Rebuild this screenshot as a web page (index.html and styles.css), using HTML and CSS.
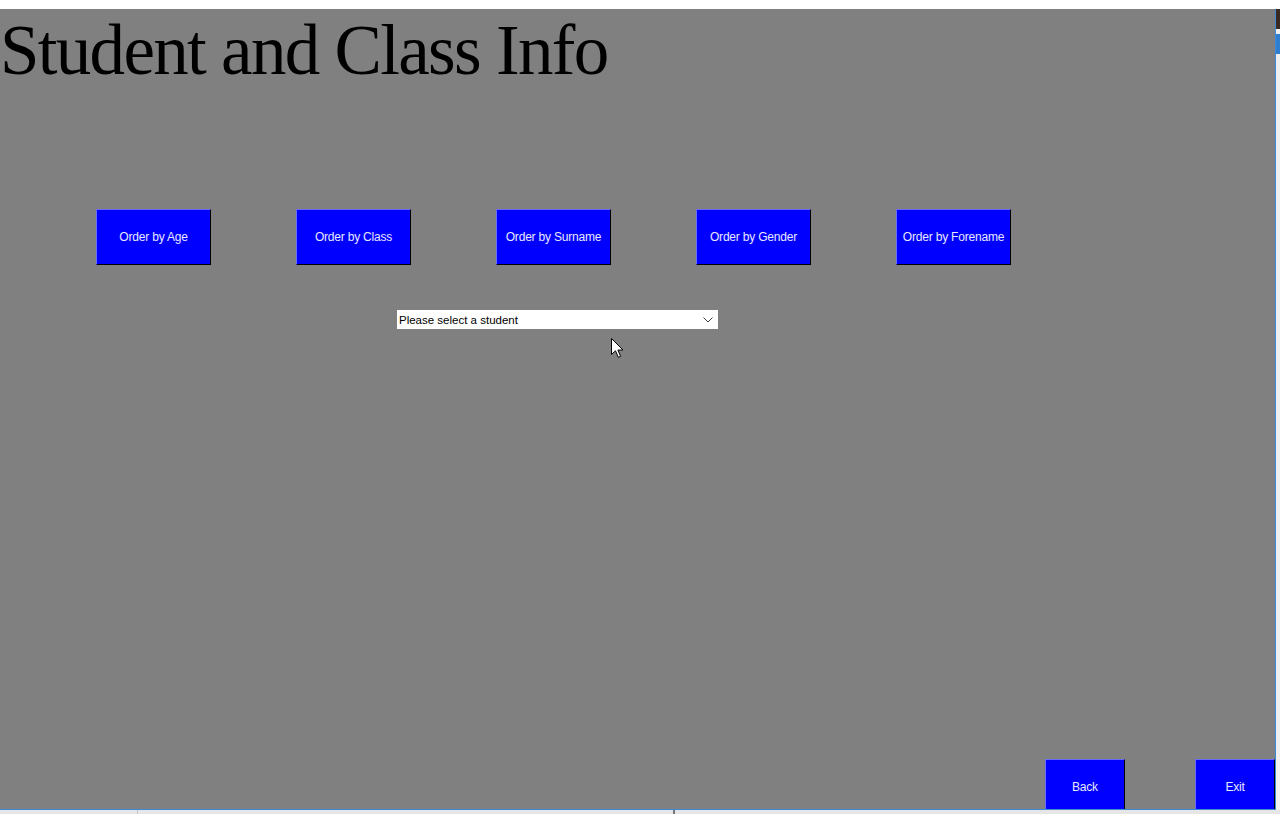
FILE: index.html
```html
<!DOCTYPE html>
<html>
<head>
<meta charset="utf-8">
<title>Student and Class Info</title>
<link rel="stylesheet" href="styles.css">
</head>
<body>
<div class="topstrip"></div>
<div class="middle">
  <div class="window">
    <h1 class="title">Student and Class Info</h1>
    <div class="order-row">
      <button class="btn order">Order by Age</button>
      <button class="btn order">Order by Class</button>
      <button class="btn order">Order by Surname</button>
      <button class="btn order">Order by Gender</button>
      <button class="btn order">Order by Forename</button>
    </div>
    <div class="select-row">
      <div class="combo">
        <span class="combo-text">Please select a student</span>
        <svg class="chev" width="10" height="6" viewBox="0 0 10 6"><path d="M0.5 0.5 L5 5 L9.5 0.5" fill="none" stroke="#444" stroke-width="1"/></svg>
      </div>
    </div>
    <div class="footer">
      <button class="btn nav">Back</button>
      <button class="btn nav">Exit</button>
    </div>
    <svg class="cursor" width="14" height="22" viewBox="0 0 14 22"><path d="M0.5 0.5 L0.5 16.5 L4.5 12.8 L7.3 19.3 L9.6 18.3 L6.9 12 L12 12 Z" fill="#fff" stroke="#000" stroke-width="1" stroke-linejoin="miter"/></svg>
  </div>
  <div class="rightstrip">
    <div class="rs-dark"></div>
    <div class="rs-blue"></div>
  </div>
</div>
<div class="bottomstrip">
  <div class="bs-seg bs-a"></div>
  <div class="bs-seg bs-b"></div>
  <div class="bs-seg bs-c"></div>
</div>
</body>
</html>
```
FILE: styles.css
```css
html, body {
  margin: 0;
  padding: 0;
  width: 1280px;
  height: 814px;
  overflow: hidden;
  background: #ffffff;
}
.topstrip {
  height: 9px;
  background: #ffffff;
}
.middle {
  display: flex;
  height: 801px;
}
.window {
  position: relative;
  width: 1276px;
  height: 801px;
  background: #808080;
  display: flex;
  flex-direction: column;
  border-right: 1px solid #3b8ad8;
  border-bottom: 1px solid #3b8ad8;
  box-sizing: border-box;
}
.title {
  margin: 0;
  font-family: "Liberation Serif", "Times New Roman", serif;
  font-weight: normal;
  font-size: 71px;
  letter-spacing: -1.7px;
  line-height: 82px;
  color: #000;
  white-space: nowrap;
}
.btn {
  background: #0000ff;
  color: #e8e8ff;
  font-family: "Liberation Sans", Arial, sans-serif;
  font-size: 12px;
  letter-spacing: -0.2px;
  border-style: solid;
  border-width: 1px;
  border-color: #6a6aff #000 #000 #6a6aff;
  padding: 0;
  margin: 0;
  box-sizing: border-box;
}
.order-row {
  display: flex;
  gap: 85px;
  padding-left: 96px;
  margin-top: 118px;
}
.order {
  width: 115px;
  height: 56px;
}
.select-row {
  padding-left: 397px;
  margin-top: 45px;
}
.combo {
  width: 321px;
  height: 19px;
  background: #fff;
  display: flex;
  align-items: center;
  justify-content: space-between;
  box-sizing: border-box;
  padding: 0 3px 0 2px;
}
.combo-text {
  font-family: "Liberation Sans", Arial, sans-serif;
  font-size: 11.5px;
  color: #000;
}
.chev {
  margin-right: 2px;
}
.footer {
  margin-top: auto;
  display: flex;
  justify-content: flex-end;
  gap: 70px;
}
.nav {
  width: 80px;
  height: 50px;
  padding-top: 5px;
  border-bottom: none;
}
.cursor {
  position: absolute;
  left: 611px;
  top: 329px;
}
.rightstrip {
  width: 4px;
  height: 801px;
  background: #f0f0f0;
  display: flex;
  flex-direction: column;
}
.rs-dark {
  height: 20px;
  background: #3a2a22;
}
.rs-blue {
  height: 20px;
  margin-top: 5px;
  background: #2f7fd0;
}
.bottomstrip {
  height: 4px;
  display: flex;
  background: #e6e6e6;
}
.bs-seg {
  height: 4px;
}
.bs-a {
  width: 137px;
  border-right: 1px solid #c8c8c8;
}
.bs-b {
  width: 535px;
  border-right: 2px solid #777;
}
.bs-c {
  flex: 1;
}
```
